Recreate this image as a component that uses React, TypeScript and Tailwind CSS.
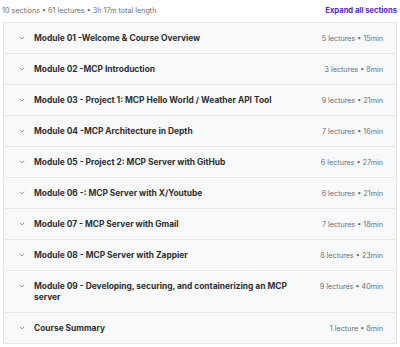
import { ChevronDown } from "lucide-react";

const sections = [
  { title: "Module 01 -Welcome & Course Overview", meta: "5 lectures • 15min" },
  { title: "Module 02 -MCP Introduction", meta: "3 lectures • 8min" },
  { title: "Module 03 - Project 1: MCP Hello World / Weather API Tool", meta: "9 lectures • 21min" },
  { title: "Module 04 -MCP Architecture in Depth", meta: "7 lectures • 16min" },
  { title: "Module 05 - Project 2: MCP Server with GitHub", meta: "6 lectures • 27min" },
  { title: "Module 06 -: MCP Server with X/Youtube", meta: "6 lectures • 21min" },
  { title: "Module 07 - MCP Server with Gmail", meta: "7 lectures • 18min" },
  { title: "Module 08 - MCP Server with Zappier", meta: "8 lectures • 23min" },
  {
    title: "Module 09 - Developing, securing, and containerizing an MCP server",
    meta: "9 lectures • 40min",
  },
  { title: "Course Summary", meta: "1 lecture • 8min" },
];

export default function App() {
  return (
    <div className="h-[347px] w-[400px] bg-white font-['Inter',sans-serif] text-[#2d2f31]">
      <div className="flex h-[22px] items-center justify-between pl-[2px] pr-[3px]">
        <span className="text-[7.2px] text-[#6a6f73]">
          10 sections • 61 lectures • 3h 17m total length
        </span>
        <button type="button" className="text-[7.6px] font-bold text-[#5624d0]">
          Expand all sections
        </button>
      </div>

      <ul className="mx-[3px] border border-[#e4e8eb]">
        {sections.map((s, i) => (
          <li
            key={i}
            className={`flex items-start gap-[8px] bg-[#f7f9fa] py-[9.5px] pl-[14px] pr-[13px] ${
              i > 0 ? "border-t border-[#e4e8eb]" : ""
            }`}
          >
            <ChevronDown className="mt-[1.5px] h-[8px] w-[8px] shrink-0 text-[#6a6f73]" strokeWidth={2} />
            <span className="flex-1 text-[8.4px] font-bold leading-[11px]">{s.title}</span>
            <span className="ml-[24px] shrink-0 text-[7.2px] leading-[11px] text-[#6a6f73]">
              {s.meta}
            </span>
          </li>
        ))}
      </ul>
    </div>
  );
}
